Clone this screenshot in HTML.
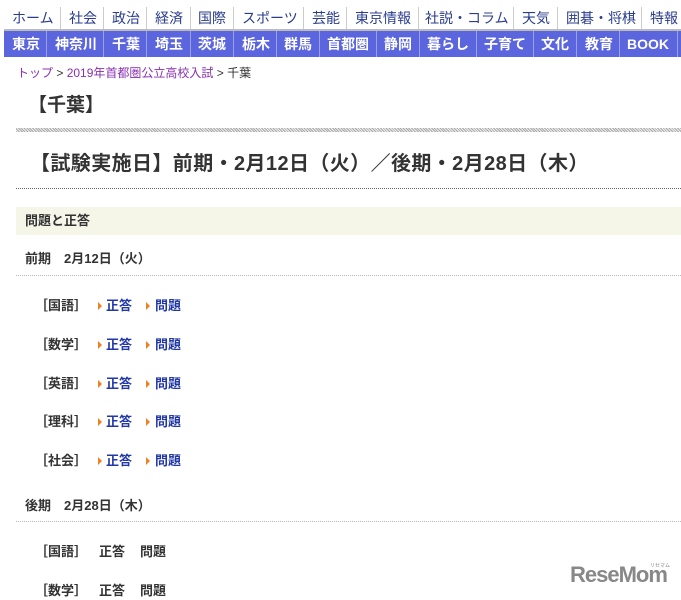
<!DOCTYPE html>
<html><head><meta charset="utf-8"><style>
body{margin:0;width:681px;height:600px;overflow:hidden;background:#fff;font-family:"Liberation Sans","Noto Sans CJK JP",sans-serif;position:relative}
.a{position:absolute;white-space:nowrap}
.t{font-size:14px;color:#2a3d8f;top:8px;line-height:20px}
.d{position:absolute;top:7px;height:22px;width:1px;background:#ccc}
.bar{position:absolute;left:4px;top:31px;width:677px;height:26px;background:#5b65dd}
.b{font-size:14px;color:#fff;font-weight:bold;top:34px;line-height:20px}
.bd{position:absolute;top:31px;height:26px;width:1px;background:#9aa2ee}
.lab{font-size:13px;font-weight:bold;color:#333;line-height:18px}
.lk{font-size:13px;font-weight:bold;color:#2238a8;line-height:18px}
.ar{position:absolute;width:0;height:0;border-left:4px solid #f08020;border-top:4px solid transparent;border-bottom:4px solid transparent}
</style></head><body>
<div class="a t" style="left:12px">ホーム</div>
<div class="a t" style="left:69px">社会</div>
<div class="a t" style="left:112px">政治</div>
<div class="a t" style="left:155px">経済</div>
<div class="a t" style="left:198px">国際</div>
<div class="a t" style="left:242px">スポーツ</div>
<div class="a t" style="left:312px">芸能</div>
<div class="a t" style="left:355px">東京情報</div>
<div class="a t" style="left:425px">社説・コラム</div>
<div class="a t" style="left:522px">天気</div>
<div class="a t" style="left:566px">囲碁・将棋</div>
<div class="a t" style="left:650px">特報</div>
<div class="d" style="left:60px"></div><div class="d" style="left:103px"></div><div class="d" style="left:146px"></div><div class="d" style="left:190px"></div><div class="d" style="left:233px"></div><div class="d" style="left:303px"></div><div class="d" style="left:346px"></div><div class="d" style="left:418px"></div><div class="d" style="left:513px"></div><div class="d" style="left:557px"></div><div class="d" style="left:641px"></div>
<div class="a" style="left:4px;top:29px;width:677px;height:2px;background:#bbb"></div>
<div class="bar"></div>
<div class="a b" style="left:12px">東京</div>
<div class="a b" style="left:55px">神奈川</div>
<div class="a b" style="left:112px">千葉</div>
<div class="a b" style="left:155px">埼玉</div>
<div class="a b" style="left:198px">茨城</div>
<div class="a b" style="left:242px">栃木</div>
<div class="a b" style="left:284px">群馬</div>
<div class="a b" style="left:327px">首都圏</div>
<div class="a b" style="left:384px">静岡</div>
<div class="a b" style="left:427px">暮らし</div>
<div class="a b" style="left:484px">子育て</div>
<div class="a b" style="left:541px">文化</div>
<div class="a b" style="left:585px">教育</div>
<div class="a b" style="left:627px">BOOK</div>
<div class="bd" style="left:46px"></div><div class="bd" style="left:103px"></div><div class="bd" style="left:146px"></div><div class="bd" style="left:190px"></div><div class="bd" style="left:233px"></div><div class="bd" style="left:276px"></div><div class="bd" style="left:319px"></div><div class="bd" style="left:376px"></div><div class="bd" style="left:419px"></div><div class="bd" style="left:476px"></div><div class="bd" style="left:533px"></div><div class="bd" style="left:576px"></div><div class="bd" style="left:619px"></div><div class="bd" style="left:677px"></div>

<div class="a" style="left:17px;top:65px;font-size:12px;line-height:16px;color:#333"><span style="color:#8a2fb0">トップ</span> &gt; <span style="color:#8a2fb0">2019年首都圏公立高校入試</span> &gt; 千葉</div>
<div class="a" style="left:28px;top:94px;font-size:19px;font-weight:bold;color:#333;line-height:24px">【千葉】</div>
<div class="a" style="left:16px;top:128px;width:665px;height:4px;background:repeating-linear-gradient(45deg,#aaa 0 1px,#eee 1px 2px)"></div>
<div class="a" style="left:30px;top:151px;font-size:20px;font-weight:bold;color:#333;line-height:26px;letter-spacing:0.4px">【試験実施日】前期・2月12日（火）／後期・2月28日（木）</div>
<div class="a" style="left:16px;top:188px;width:665px;border-top:1px dotted #666"></div>
<div class="a" style="left:16px;top:207px;width:665px;height:28px;background:#f5f5e8"></div>
<div class="a lab" style="left:25px;top:212px">問題と正答</div>
<div class="a lab" style="left:25px;top:250px">前期　2月12日（火）</div>
<div class="a" style="left:16px;top:275px;width:665px;border-top:1px dotted #bbb"></div>

<div class="a lab" style="left:35px;top:297px">［国語］</div>
<div class="a lab" style="left:35px;top:336px">［数学］</div>
<div class="a lab" style="left:35px;top:375px">［英語］</div>
<div class="a lab" style="left:35px;top:413px">［理科］</div>
<div class="a lab" style="left:35px;top:452px">［社会］</div>
<div class="ar" style="left:98px;top:302px"></div><div class="ar" style="left:146px;top:302px"></div>
<div class="ar" style="left:98px;top:341px"></div><div class="ar" style="left:146px;top:341px"></div>
<div class="ar" style="left:98px;top:380px"></div><div class="ar" style="left:146px;top:380px"></div>
<div class="ar" style="left:98px;top:418px"></div><div class="ar" style="left:146px;top:418px"></div>
<div class="ar" style="left:98px;top:457px"></div><div class="ar" style="left:146px;top:457px"></div>
<div class="a lk" style="left:106px;top:297px">正答</div><div class="a lk" style="left:155px;top:297px">問題</div>
<div class="a lk" style="left:106px;top:336px">正答</div><div class="a lk" style="left:155px;top:336px">問題</div>
<div class="a lk" style="left:106px;top:375px">正答</div><div class="a lk" style="left:155px;top:375px">問題</div>
<div class="a lk" style="left:106px;top:413px">正答</div><div class="a lk" style="left:155px;top:413px">問題</div>
<div class="a lk" style="left:106px;top:452px">正答</div><div class="a lk" style="left:155px;top:452px">問題</div>

<div class="a lab" style="left:25px;top:497px">後期　2月28日（木）</div>
<div class="a" style="left:16px;top:521px;width:665px;border-top:1px dotted #bbb"></div>
<div class="a lab" style="left:35px;top:543px">［国語］</div>
<div class="a lab" style="left:35px;top:582px">［数学］</div>
<div class="a lab" style="left:99px;top:543px">正答</div><div class="a lab" style="left:140px;top:543px">問題</div>
<div class="a lab" style="left:99px;top:582px">正答</div><div class="a lab" style="left:140px;top:582px">問題</div>

<div class="a" style="left:570px;top:562px;font-size:22px;font-weight:bold;color:#888;line-height:26px;letter-spacing:-1px">ReseMom</div>
<div class="a" style="left:650px;top:562px;font-size:5px;color:#888">リセマム</div>
</body></html>
